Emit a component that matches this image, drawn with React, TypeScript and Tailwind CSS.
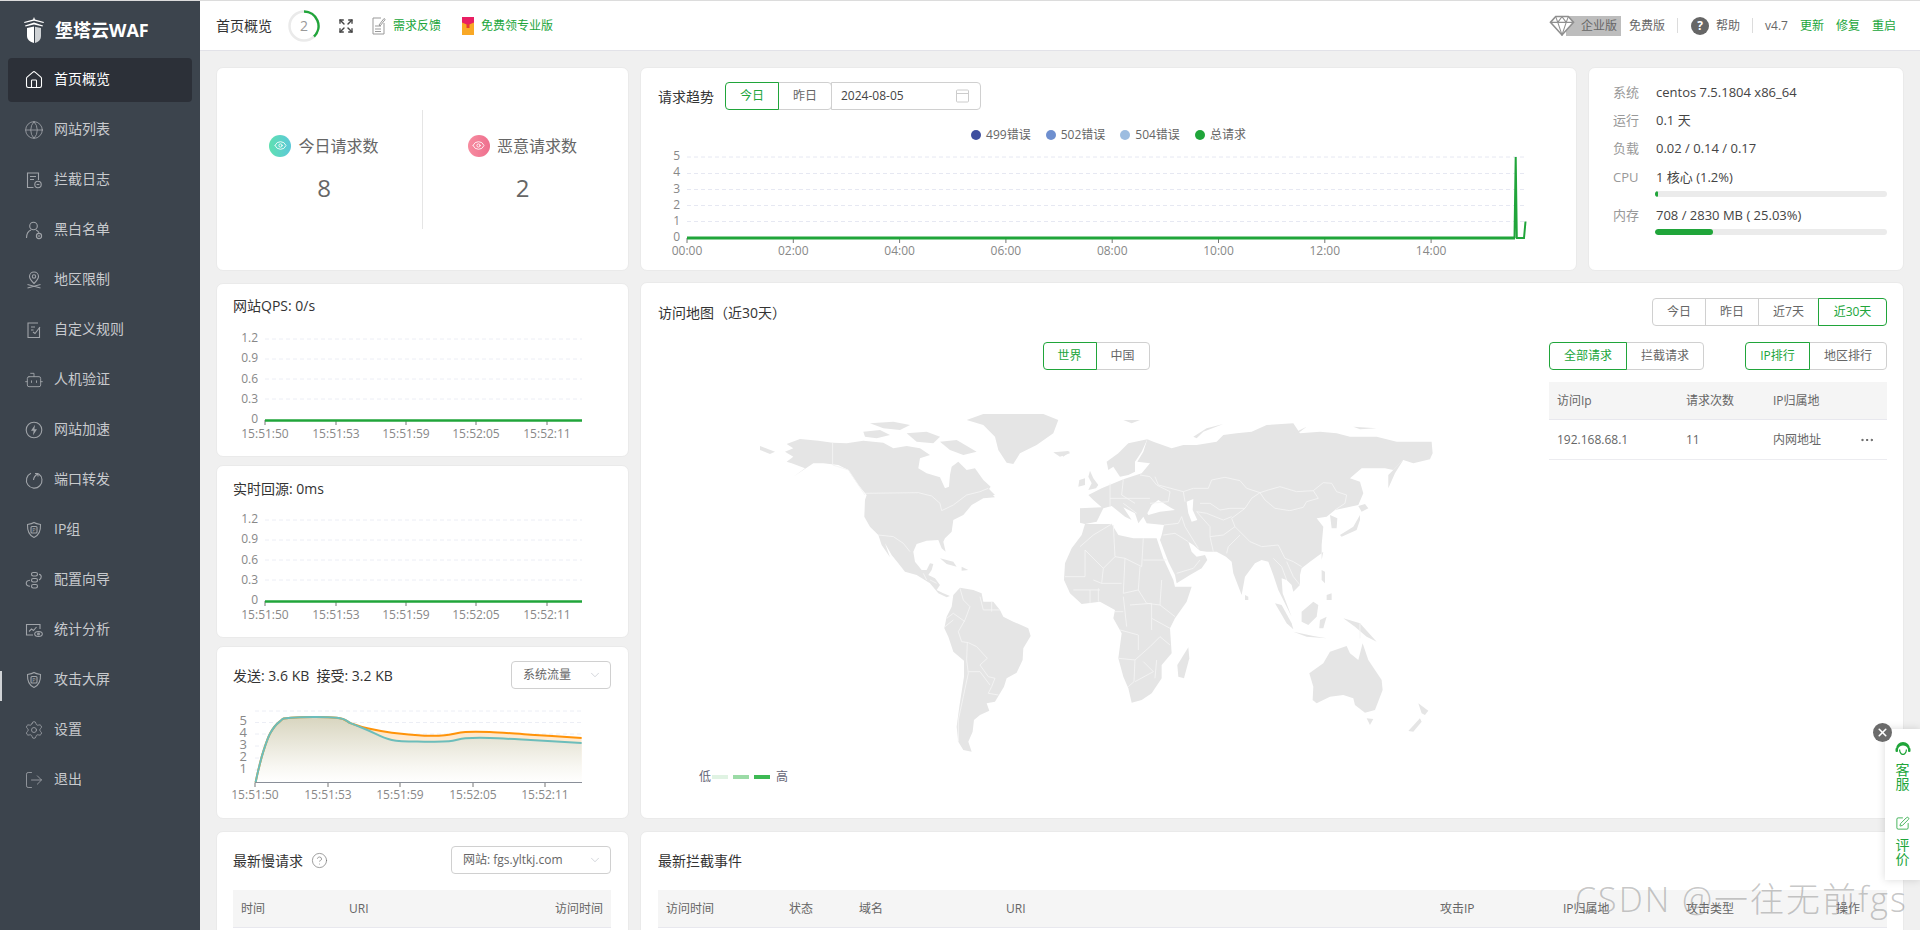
import React from "react";
import { House, Globe, Bot, Settings, LogOut, Expand, Eye, ChevronDown, Ellipsis, SquarePen, X, CircleHelp } from "lucide-react";

type P = number[][];
const smooth = (p: P) => {
  let d = `M${p[0][0]},${p[0][1]}`;
  for (let i = 0; i < p.length - 1; i++) {
    const a = p[i - 1] || p[i], b = p[i], c = p[i + 1], e = p[i + 2] || c;
    d += ` C${b[0] + (c[0] - a[0]) / 6},${b[1] + (c[1] - a[1]) / 6} ${c[0] - (e[0] - b[0]) / 6},${c[1] - (e[1] - b[1]) / 6} ${c[0]},${c[1]}`;
  }
  return d;
};
const T = (a: P): P => a.map(([x, y]) => [x / 2.45, 620 + y / 3]);
const rise: P = [[626, 488], [634, 445], [645, 395], [662, 340], [685, 305], [712, 293], [825, 293], [860, 310]];
const orange = T([...rise, [900, 325], [960, 338], [1040, 347], [1090, 346], [1140, 336], [1200, 336], [1300, 344], [1425, 354]]);
const teal = T([...rise, [900, 330], [960, 360], [1040, 365], [1100, 364], [1140, 355], [1200, 354], [1300, 360], [1425, 369]]);
const BASE = 782.5;
const area = (p: P) => `${smooth(p)} L${p[p.length - 1][0]},${BASE} L${p[0][0]},${BASE} Z`;

const LAND_AM = [
  "110,72 150,57 205,62 248,68 290,70 340,62 400,68 430,85 470,78 510,85 540,105 510,115 505,145 530,160 570,172 585,205 597,200 600,165 605,140 625,125 650,150 675,145 700,180 722,200 715,210 735,232 700,235 665,255 640,285 610,300 605,335 585,355 580,365 587,395 575,385 565,360 530,362 500,372 490,395 495,425 515,450 530,450 540,430 550,432 545,450 535,465 555,475 570,495 560,510 580,520 600,528 590,532 565,520 540,490 500,465 465,455 445,430 425,405 405,370 420,412 395,375 385,345 360,320 343,290 345,240 350,225 325,195 295,150 265,135 220,130 190,130 160,150 130,170 165,145 125,130 110,125 130,110 105,95 130,85",
  "340,35 390,30 420,45 380,55 345,50",
  "360,10 430,5 480,15 450,30 400,25",
  "470,40 530,35 570,50 550,70 500,65",
  "570,65 620,60 680,95 640,105 600,90",
  "700,-18 880,-18 925,0 910,40 860,75 810,100 790,132 770,128 745,90 735,50 700,15 650,0",
  "910,97 955,93 960,100 930,110",
  "30,78 75,95 60,102 30,90",
  "715,205 735,225 712,225",
  "570,415 610,425 620,440 590,432",
  "635,440 655,450 635,452",
  "630,503 670,510 695,520 700,545 730,545 750,570 760,590 790,605 835,625 842,648 820,685 818,720 800,758 770,775 762,800 735,845 710,850 718,872 690,885 672,900 668,935 655,965 665,995 640,990 625,965 620,920 628,860 642,770 642,722 610,695 595,650 583,625 590,590 605,560 610,525",
];
const BORDER_AM = "M345,220 L505,218 L545,228 L570,250 L575,272 L610,255 L650,225 L690,215 L715,205 M248,68 L248,135 L295,150 L325,195 L345,225 M385,345 L430,350 L460,370 L480,395 M520,460 L530,480 M540,480 L560,490 M630,505 L640,540 L660,560 L645,600 L625,635 L635,665 L655,668 L680,680 L712,715 L690,735 L715,770 L735,775 L725,800 L715,820 M652,668 L650,720 L655,760 L640,830 L625,900 L625,965 M590,595 L610,580 L645,605 M585,620 L610,600 M690,530 L700,570 L750,570 M725,545 L725,575 M655,755 L690,755 L720,795 M715,820 L745,825";
const LAND_EA = [
  "280,65 335,85 370,75 410,75 470,65 490,45 530,40 575,35 620,15 700,10 720,40 780,35 830,40 870,50 950,50 1010,65 1115,65 1118,100 1110,118 1060,130 1030,120 1000,150 975,145 905,145 870,175 900,185 910,220 895,255 850,265 825,270 800,290 770,295 790,320 785,375 785,400 750,425 725,445 720,465 720,495 700,515 695,495 680,480 665,475 668,520 695,590 680,560 655,510 640,465 625,425 605,420 585,430 555,470 545,525 520,460 515,425 498,410 470,395 440,395 420,392 400,375 385,365 395,395 410,410 435,405 442,420 425,445 390,465 350,490 345,465 325,425 300,360 305,345 312,315 260,310 250,290 235,310 225,280 190,262 215,300 195,290 155,258 130,265 110,305 75,312 60,308 60,265 125,262 100,240 85,225 125,205 190,178 245,160 270,130 232,125 250,95 262,58",
  "140,125 175,100 205,70 262,58 245,95 225,125 225,155 205,165 180,170 160,140 145,150",
  "90,152 100,175 115,195 108,205 85,210 95,190 85,170",
  "58,180 75,175 75,195 55,200",
  "0,97 30,95 10,110",
  "400,50 440,25 490,12 430,35 410,55",
  "190,0 240,0 215,10",
  "880,20 950,25 900,28",
  "700,40 740,20 720,35",
  "985,205 985,165 1030,120 1005,160",
  "840,345 880,320 900,285 900,300 890,330 845,350",
  "895,258 915,252 925,265 905,275",
  "810,285 832,295 830,325 815,325",
  "785,400 790,395 785,420",
  "555,525 565,530 565,540 555,540",
  "785,450 795,455 795,490 785,480",
  "800,525 815,520 815,540 800,540",
  "645,550 665,555 695,610 700,628 680,610",
  "700,635 760,648 800,655 740,650",
  "725,575 760,545 775,555 770,590 745,615 725,605",
  "780,600 800,590 790,625 778,625",
  "850,595 900,610 950,665 920,650 885,620",
  "748,760 790,730 810,695 860,678 870,700 895,720 908,670 925,720 965,780 968,810 945,870 915,878 885,855 880,835 850,825 810,830 770,850 758,840 760,800",
  "920,895 940,897 930,915",
  "1075,850 1105,872 1095,885 1085,880",
  "1045,933 1080,895 1085,905 1060,935",
  "385,682 388,715 372,775 355,770 352,735",
  "75,312 155,312 175,345 220,355 290,355 310,415 340,480 345,500 395,500 380,545 345,595 330,625 335,700 305,735 305,775 275,820 245,840 215,848 205,805 190,770 175,715 185,640 160,595 165,570 120,545 65,552 30,520 12,480 15,430 35,385 65,345",
];
const SEAS_EA = [
  "262,280 275,255 295,240 330,262 345,270 300,275 265,285",
  "380,245 400,237 398,270 412,300 395,305 385,280",
];
const BORDER_EA = "M370,215 L400,205 L445,205 L455,180 L495,172 L540,182 L560,205 L600,218 L625,210 L660,200 L710,215 L760,212 L790,188 L815,190 L830,215 L860,225 L855,250 L825,270 M600,218 L615,240 L645,265 L690,272 L730,262 L740,245 L775,235 L760,212 M370,215 L375,245 M420,250 L450,250 L480,270 L510,265 L555,265 L575,235 L600,218 M555,265 L515,295 L525,320 L550,345 L570,365 L605,380 L655,375 L675,415 L700,425 L725,440 M365,290 L375,320 L415,385 M410,275 L450,320 L450,350 L460,395 M450,350 L490,345 L525,320 M500,400 L505,380 L540,345 M410,275 L440,280 L490,300 L515,290 M312,315 L355,310 L365,290 M310,345 L345,340 L385,365 M350,460 L400,445 L420,420 M150,190 L150,260 M190,178 L185,225 L225,250 M240,165 L270,170 L290,195 L330,215 L325,245 L270,250 M150,235 L270,235 M190,250 L230,280 M285,170 L295,195 L370,215 M640,415 L665,440 L680,480 M680,425 L700,470 L720,495 M60,380 L100,345 L155,312 M160,315 L165,410 L130,445 L75,390 L75,470 L15,470 M165,410 L195,415 L245,440 L250,355 M250,420 L320,420 M195,415 L190,520 M130,445 L125,490 M240,440 L235,510 L260,550 L300,555 M190,520 L235,510 M305,480 L300,555 L345,590 M190,530 L200,620 M165,575 L190,575 M210,555 L275,550 L275,630 M180,630 L235,645 L235,690 M330,625 L275,595 M175,715 L225,720 L270,680 L300,650 L330,675 M225,720 L222,785 L205,800 M225,785 L280,755 L250,725 M290,720 L285,775 M100,480 L125,490 L185,490 M40,510 L120,510 M90,510 L90,550 M115,505 L115,545 M900,610 L900,655";

const WorldMap = () => (
  <svg viewBox="740 410 720 350" className="block w-[720px] h-[350px] ml-[82px] mt-[40px]">
    <g transform="translate(750 420) scale(0.3333)" fill="#e5e5e5">
      {LAND_AM.map((p, i) => <polygon key={i} points={p} />)}
      <path d={BORDER_AM} fill="none" stroke="#f5f5f5" strokeWidth="2.6" />
    </g>
    <g transform="translate(1060 420) scale(0.3333)" fill="#e5e5e5">
      {LAND_EA.map((p, i) => <polygon key={i} points={p} />)}
      {SEAS_EA.map((p, i) => <polygon key={i} points={p} fill="#fff" />)}
      <path d={BORDER_EA} fill="none" stroke="#f5f5f5" strokeWidth="2.6" />
    </g>
  </svg>
);

const ic = { width: 20, height: 20, viewBox: "0 0 20 20", fill: "none", stroke: "currentColor", strokeWidth: 1.1 };
const ShieldP = () => (
  <svg {...ic}>
    <path d="M3.5 4.5 C7 4 9 3.2 10 2.5 C11 3.2 13 4 16.5 4.5 C16.8 11 14.5 15.5 10 17.5 C5.5 15.5 3.2 11 3.5 4.5Z" />
    <rect x="7" y="6.5" width="6" height="6.5" rx="1" />
    <text x="10" y="11.8" fontSize="5.5" textAnchor="middle" fill="currentColor" stroke="none">P</text>
  </svg>
);
const DocIcon = () => (
  <svg {...ic}><path d="M14.5 10V3H3.5v14.5h6" /><path d="M6 6.5h6M6 9.5h4" /><circle cx="14" cy="14.5" r="3.2" /><path d="M12.6 14.5h2.8" /></svg>
);
const UserIcon = () => (
  <svg {...ic}><circle cx="9.5" cy="6" r="3.8" /><path d="M2.5 18c0-4 2-7 4.5-8M12 10c1.3.6 2.3 1.5 3 2.8" /><circle cx="15" cy="16" r="2.6" /><path d="M13.8 16h2.4" /></svg>
);
const PinIcon = () => (
  <svg {...ic}><path d="M10 13.5C7 10.5 5.5 8.5 5.5 6.500a4.500 4.500 0 0 1 9 0c0 2-1.500 4-4.500 7Z" /><circle cx="10" cy="6.500" r="1.700" /><path d="M3.500 14.500l13 3.500M16.500 14.500l-13 3.500" /></svg>
);
const RuleIcon = () => (
  <svg {...ic}><path d="M15.500 7.500V17.500H4V3h10" /><path d="M7 7h4M7 10h2.500" /><path d="M9 12l2 1.500 5-6.500" /></svg>
);
const BoltIcon = () => (
  <svg {...ic}><circle cx="10" cy="10" r="7.800" /><path d="M11 4.800 7 10.800h2.600L9 15.200l4-6h-2.600Z" fill="currentColor" stroke="none" /></svg>
);
const PortIcon = () => (
  <svg {...ic}><path d="M7 3.200A7.800 7.800 0 1 0 14.500 3.800" /><path d="M9.500 10c.2-2.500 1.500-4.500 4-6M11 3.500h3v3" /></svg>
);
const FlowIcon = () => (
  <svg {...ic}><rect x="7.500" y="2.500" width="6" height="3.500" rx="1.700" /><rect x="7.500" y="8.500" width="6" height="3.500" rx="1.700" /><rect x="7.500" y="14.500" width="6" height="3.500" rx="1.700" /><path d="M15 4.200c3 .5 3 4.500 0 5.800M6 10.200c-5 .5-5 5.500 0 6" /></svg>
);
const StatIcon = () => (
  <svg {...ic}><path d="M9 15H2.500V4.500h13.500V9" /><path d="M5 11.500l2.500-2.500 2 1.500 3-3.500" /><ellipse cx="14.500" cy="14" rx="3.800" ry="2.500" /><circle cx="14.500" cy="14" r=".9" /></svg>
);

const MENU: [string, React.ReactNode][] = [
  ["首页概览", <House size={20} strokeWidth={1.3} />],
  ["网站列表", <Globe size={20} strokeWidth={1} />],
  ["拦截日志", <DocIcon />],
  ["黑白名单", <UserIcon />],
  ["地区限制", <PinIcon />],
  ["自定义规则", <RuleIcon />],
  ["人机验证", <Bot size={20} strokeWidth={1.1} />],
  ["网站加速", <BoltIcon />],
  ["端口转发", <PortIcon />],
  ["IP组", <ShieldP />],
  ["配置向导", <FlowIcon />],
  ["统计分析", <StatIcon />],
  ["攻击大屏", <ShieldP />],
  ["设置", <Settings size={20} strokeWidth={1} />],
  ["退出", <LogOut size={20} strokeWidth={1} />],
];

const Sidebar = () => (
  <aside className="relative w-[200px] shrink-0 bg-[#3c444d] h-full">
    <div className="h-[57px] flex items-center pl-[23px]">
      <svg width="22" height="26" viewBox="0 0 22 26" fill="#fff">
        <path d="M11 0 L12 2.5 L21 5 L20.500 6 L11 3.800 L1.500 6 L1 5 L10 2.500Z" />
        <path d="M11 5.500 L20 8.500 L19.500 9.500 L11 7.500 L2.500 9.500 L2 8.500Z" />
        <path d="M4 11 L11 9.500 L11 26 C7 25 4 22.500 4 19Z" />
        <path d="M18 11 L12 9.800 L12 26 C15.500 25 18 22.500 18 19Z" fill="#cfd2d5" />
      </svg>
      <span className="ml-[10px] text-[18px] font-bold text-white leading-none">堡塔云WAF</span>
    </div>
    <nav className="px-[8px] flex flex-col gap-[6px]">
      {MENU.map(([label, icon], i) => (
        <div key={label} className={i === 0 ? "h-[44px] rounded-[4px] bg-[#2c3038] flex items-center pl-[16px] text-white" : "h-[44px] flex items-center pl-[16px] text-[#c8cacd]"}>
          <span className={i === 0 ? "w-[20px] flex justify-center text-white" : "w-[20px] flex justify-center text-[#a0a4a9]"}>{icon}</span>
          <span className="ml-[10px] text-[14px] leading-[18px] pb-[2px]">{label}</span>
        </div>
      ))}
    </nav>
    <div className="absolute left-0 top-[670px] w-[2px] h-[30px] bg-[#d0d3d6]" />
  </aside>
);

const Divider = () => <span className="w-px h-[15px] bg-[#dcdcdc]" />;

const Header = () => (
  <header className="h-[50px] shrink-0 bg-white border-b border-[#e2e2e8] flex items-center pl-[16px] pr-[24px] text-[12px]">
    <span className="text-[14px] text-[#333]">首页概览</span>
    <span className="relative ml-[16px] w-[32px] h-[32px] flex items-center justify-center text-[#999] text-[14px]">
      <svg width="32" height="32" viewBox="0 0 32 32" className="absolute inset-0">
        <circle cx="16" cy="16" r="14.5" fill="none" stroke="#eaeaea" strokeWidth="2.5" />
        <path d="M16 1.5A14.5 14.5 0 0 1 26 26.5" fill="none" stroke="#20a53a" strokeWidth="2.5" />
      </svg>
      2
    </span>
    <Expand size={16} strokeWidth={2} className="ml-[18px] text-[#444]" />
    <svg width="14" height="18" viewBox="0 0 14 18" fill="none" stroke="#999" strokeWidth="1" className="ml-[18px]">
      <path d="M9 1H1v16h11V6" /><path d="M3 9h6M3 12h6M3 14.5h6" /><path d="M7 8l5-6.500 1.200 1L8 9Z" />
    </svg>
    <span className="ml-[7px] text-[#20a53a]">需求反馈</span>
    <svg width="12" height="18" viewBox="0 0 12 18" className="ml-[21px]">
      <rect width="12" height="18" fill="#f9a825" />
      <path d="M0 0h12v5.500L6 8 0 5.500Z" fill="#e91e63" />
      <rect x="4.500" y="7" width="3" height="4" fill="#e53935" />
    </svg>
    <span className="ml-[7px] text-[#20a53a]">免费领专业版</span>
    <div className="ml-auto flex items-center">
      <div className="flex items-center">
        <svg width="26" height="21" viewBox="0 0 24 20" fill="none" stroke="#8f8f8f" strokeWidth="1.5" className="relative z-10">
          <path d="M6 1.500h12l5 5.500L12 19 1 7Z" fill="#fff" /><path d="M1 7h22M8 7l4 12 4-12M6 1.500 8 7l4-5.500L16 7l2-5.500" strokeWidth="1" />
        </svg>
        <span className="-ml-[9px] w-[55px] h-[20px] bg-[#bdbdbd] text-[#666] flex items-center justify-end pr-[4px]">企业版</span>
      </div>
      <span className="ml-[8px] text-[#666]">免费版</span>
      <span className="ml-[12px] flex"><Divider /></span>
      <span className="ml-[13px] w-[18px] h-[18px] rounded-full bg-[#666] text-white font-bold flex items-center justify-center">?</span>
      <span className="ml-[7px] text-[#666]">帮助</span>
      <span className="ml-[12px] flex"><Divider /></span>
      <span className="ml-[12px] text-[#666]">v4.7</span>
      <span className="ml-[12px] text-[#20a53a]">更新</span>
      <span className="ml-[12px] text-[#20a53a]">修复</span>
      <span className="ml-[12px] text-[#20a53a]">重启</span>
    </div>
  </header>
);

const Card = ({ className = "", children }: { className?: string; children?: React.ReactNode }) => (
  <div className={`bg-white rounded-[7px] border border-[#eaeaea] shrink-0 ${className}`}>{children}</div>
);

const Seg = ({ items, widths, active }: { items: string[]; widths: string[]; active: number }) => (
  <div className="flex h-[28px] text-[12px]">
    {items.map((t, i) => {
      const first = i === 0, last = i === items.length - 1;
      const on = i === active;
      return (
        <span key={t} className={`${widths[i]} flex items-center justify-center border ${on ? "relative z-10 border-[#20a53a] text-[#20a53a]" : "border-[#d0d0d0] text-[#666]"} ${first ? "rounded-l-[4px]" : "-ml-px"} ${last ? "rounded-r-[4px]" : ""}`}>{t}</span>
      );
    })}
  </div>
);

const Stat = ({ label, value, from, to, className }: { label: string; value: string; from: string; to: string; className: string }) => (
  <div className={`w-[205px] flex flex-col items-center ${className}`}>
    <div className="flex items-center h-[22px]">
      <span className={`w-[22px] h-[22px] rounded-full bg-gradient-to-r ${from} ${to} flex items-center justify-center text-white`}>
        <Eye size={13} strokeWidth={1.6} />
      </span>
      <span className="ml-[7px] text-[16px] text-[#666]">{label}</span>
    </div>
    <span className="mt-[15px] text-[24px] leading-[32px] text-[#666]">{value}</span>
  </div>
);

const X_LABELS = ["15:51:50", "15:51:53", "15:51:59", "15:52:05", "15:52:11"];
const axisText = { fill: "#888", fontSize: 12 };

const QpsChart = ({ className = "" }: { className?: string }) => {
  const xs = [48, 119, 189, 259, 330];
  return (
    <svg viewBox="0 0 411 130" className={`block w-[411px] h-[130px] ${className}`}>
      {[19, 39, 59, 79].map((y) => <line key={y} x1="48" x2="365" y1={y} y2={y} stroke="#eceef5" strokeDasharray="4 3" />)}
      {["1.2", "0.9", "0.6", "0.3", "0"].map((t, i) => (
        <text key={t} x="41" y={19 + i * 20.2} textAnchor="end" dominantBaseline="middle" {...axisText}>{t}</text>
      ))}
      {xs.map((x, i) => (
        <g key={x}>
          <line x1={x} x2={x} y1="100" y2="105" stroke="#777" />
          <text x={x} y="115" textAnchor="middle" dominantBaseline="middle" {...axisText}>{X_LABELS[i]}</text>
        </g>
      ))}
      <line x1="48" x2="365" y1="100.5" y2="100.5" stroke="#20a53a" strokeWidth="2.5" />
    </svg>
  );
};

const TrafficChart = () => (
  <svg viewBox="217 700 411 110" className="block w-[411px] h-[110px] mt-[11px]">
    <defs>
      <linearGradient id="ga" x1="0" y1="0" x2="0" y2="1"><stop offset="0" stopColor="#ffdfb8" /><stop offset="1" stopColor="#fff" /></linearGradient>
      <linearGradient id="gb" x1="0" y1="0" x2="0" y2="1"><stop offset="0" stopColor="#d8d5bf" /><stop offset=".75" stopColor="#f8f7f2" /><stop offset="1" stopColor="#fff" /></linearGradient>
    </defs>
    {[711, 722.5, 734, 746, 758, 770].map((y) => <line key={y} x1="255" x2="582" y1={y} y2={y} stroke="#eceef5" strokeDasharray="4 3" />)}
    {["5", "4", "3", "2", "1"].map((t, i) => (
      <text key={t} x="247" y={722 + i * 12} textAnchor="end" dominantBaseline="middle" fill="#888" fontSize="13">{t}</text>
    ))}
    <path d={area(orange)} fill="url(#ga)" />
    <path d={area(teal)} fill="url(#gb)" />
    <path d={smooth(orange)} fill="none" stroke="#ff9309" strokeWidth="2" />
    <path d={smooth(teal)} fill="none" stroke="#6cbdbb" strokeWidth="2" />
    <line x1="255" x2="582" y1="782.5" y2="782.5" stroke="#8a8f99" />
    {[255, 328, 400, 473, 545].map((x, i) => (
      <g key={x}>
        <line x1={x} x2={x} y1="783" y2="787" stroke="#777" />
        <text x={x} y="796" textAnchor="middle" dominantBaseline="middle" {...axisText}>{X_LABELS[i]}</text>
      </g>
    ))}
  </svg>
);

const TrendChart = () => (
  <svg viewBox="641 145 935 120" className="block w-[935px] h-[120px]">
    {[157, 173.5, 189.5, 205.5, 221.5].map((y) => <line key={y} x1="687" x2="1525" y1={y} y2={y} stroke="#e6e8f2" strokeDasharray="4 3" />)}
    {["5", "4", "3", "2", "1", "0"].map((t, i) => (
      <text key={t} x="680" y={157 + i * 16.2} textAnchor="end" dominantBaseline="middle" {...axisText}>{t}</text>
    ))}
    {["00:00", "02:00", "04:00", "06:00", "08:00", "10:00", "12:00", "14:00"].map((t, i) => {
      const x = 687 + i * 106.3;
      return (
        <g key={t}>
          <line x1={x} x2={x} y1="238" y2="243" stroke="#777" />
          <text x={x} y="252" textAnchor="middle" dominantBaseline="middle" {...axisText}>{t}</text>
        </g>
      );
    })}
    <line x1="687" x2="1515" y1="238" y2="238" stroke="#20a53a" strokeWidth="3" />
    <path d="M1514.5 238 L1515.7 157 L1516.8 238 H1524 L1525.5 221.5" fill="none" stroke="#20a53a" strokeWidth="2" />
  </svg>
);

const LEGEND: [string, string][] = [["499错误", "bg-[#3f4f9f]"], ["502错误", "bg-[#6e8fcf]"], ["504错误", "bg-[#9dbde0]"], ["总请求", "bg-[#20a53a]"]];

const SelectBox = ({ label, className }: { label: string; className: string }) => (
  <div className={`h-[28px] rounded-[4px] border border-[#d0d0d0] flex items-center pl-[11px] pr-[8px] text-[12px] text-[#666] justify-between ${className}`}>
    <span>{label}</span>
    <ChevronDown size={14} strokeWidth={1.2} className="text-[#c0c4cc]" />
  </div>
);

const SysRow = ({ k, v, className = "" }: { k: string; v: string; className?: string }) => (
  <div className={`flex items-center text-[13px] ${className}`}>
    <span className="w-[43px] text-[#999]">{k}</span>
    <span className="text-[#444]">{v}</span>
  </div>
);

const Bar = ({ w }: { w: string }) => (
  <div className="ml-[42px] mt-[3px] h-[6px] rounded-full bg-[#ebebeb] w-[232px] overflow-hidden">
    <div className={`h-full rounded-full bg-[#20a53a] ${w}`} />
  </div>
);

const Row1 = () => (
  <div className="flex gap-[11px]">
    <Card className="w-[413px] h-[204px] flex items-center">
      <Stat label="今日请求数" value="8" from="from-[#5fe0b0]" to="to-[#5cc8d8]" className="pl-[9px]" />
      <div className="w-px h-[119px] bg-[#e5e5e5]" />
      <Stat label="恶意请求数" value="2" from="from-[#f78ca0]" to="to-[#ee6f8e]" className="pr-[6px]" />
    </Card>
    <Card className="w-[937px] h-[204px]">
      <div className="flex items-center pl-[17px] pt-[14px]">
        <span className="text-[14px] text-[#333] w-[67px]">请求趋势</span>
        <Seg items={["今日", "昨日"]} widths={["w-[54px]", "w-[54px]"]} active={0} />
        <div className="-ml-px w-[150px] h-[28px] border border-[#d0d0d0] rounded-r-[4px] flex items-center justify-between pl-[9px] pr-[11px] text-[12px] text-[#444]">
          2024-08-05
          <svg width="13" height="14" viewBox="0 0 13 14" fill="none" stroke="#ccc"><rect x=".5" y="1" width="12" height="12" rx="1" /><path d="M.5 4.5h12" /></svg>
        </div>
      </div>
      <div className="mt-[15px] h-[20px] flex items-center justify-center gap-[15px] text-[12px] text-[#666]">
        {LEGEND.map(([t, c]) => (
          <span key={t} className="flex items-center gap-[5px]"><i className={`w-[10px] h-[10px] rounded-full ${c}`} />{t}</span>
        ))}
      </div>
      <TrendChart />
    </Card>
    <Card className="w-[316px] h-[204px] pl-[24px] pt-[11px]">
      <SysRow k="系统" v="centos 7.5.1804 x86_64" className="h-[28px]" />
      <SysRow k="运行" v="0.1 天" className="h-[28px]" />
      <SysRow k="负载" v="0.02 / 0.14 / 0.17" className="h-[28px]" />
      <SysRow k="CPU" v="1 核心 (1.2%)" className="h-[20px] mt-[5px]" />
      <Bar w="w-[3px]" />
      <SysRow k="内存" v="708 / 2830 MB ( 25.03%)" className="h-[20px] mt-[9px]" />
      <Bar w="w-[58px]" />
    </Card>
  </div>
);

const LeftStack = () => (
  <div className="w-[413px] flex flex-col gap-[8px] mt-px">
    <Card className="h-[174px]">
      <div className="pl-[16px] pt-[12px] text-[14px] h-[32px] flex items-end text-[#333]">网站QPS: 0/s</div>
      <QpsChart className="mt-[4px]" />
    </Card>
    <Card className="h-[173px]">
      <div className="pl-[16px] pt-[13px] text-[14px] h-[33px] flex items-end text-[#333]">实时回源: 0ms</div>
      <QpsChart className="mt-[2px]" />
    </Card>
    <Card className="h-[173px]">
      <div className="flex items-center justify-between pl-[16px] pr-[17px] pt-[14px]">
        <span className="text-[14px] text-[#333]">发送: 3.6 KB&nbsp;&nbsp;接受: 3.2 KB</span>
        <SelectBox label="系统流量" className="w-[100px]" />
      </div>
      <TrafficChart />
    </Card>
  </div>
);

const MapCard = () => (
  <Card className="w-[1264px] h-[537px] flex flex-col">
    <div className="flex items-center justify-between pl-[17px] pr-[16px] pt-[15px]">
      <span className="text-[14px] text-[#333]">访问地图（近30天）</span>
      <Seg items={["今日", "昨日", "近7天", "近30天"]} widths={["w-[54px]", "w-[54px]", "w-[61px]", "w-[69px]"]} active={3} />
    </div>
    <div className="flex pl-[17px] pr-[16px] mt-[16px]">
      <div className="w-[891px]">
        <div className="flex justify-center pr-[15px]">
          <Seg items={["世界", "中国"]} widths={["w-[54px]", "w-[54px]"]} active={0} />
        </div>
        <WorldMap />
        <div className="ml-[41px] mt-[8px] flex items-center text-[12px] text-[#667]">
          <span>低</span>
          <i className="ml-[1px] w-[16px] h-[4px] bg-[#e0f3e3]" />
          <i className="ml-[5px] w-[16px] h-[4px] bg-[#9bdba6]" />
          <i className="ml-[5px] w-[16px] h-[4px] bg-[#3db954]" />
          <span className="ml-[6px]">高</span>
        </div>
      </div>
      <div className="w-[338px]">
        <div className="flex justify-between">
          <Seg items={["全部请求", "拦截请求"]} widths={["w-[78px]", "w-[78px]"]} active={0} />
          <Seg items={["IP排行", "地区排行"]} widths={["w-[65px]", "w-[78px]"]} active={0} />
        </div>
        <div className="mt-[12px] h-[38px] bg-[#f5f5f5] border-b border-[#e8e8ee] flex items-center pl-[8px] text-[12px] text-[#666]">
          <span className="w-[129px]">访问Ip</span><span className="w-[87px]">请求次数</span><span>IP归属地</span>
        </div>
        <div className="h-[40px] border-b border-[#ececf0] flex items-center pl-[8px] text-[12px] text-[#666]">
          <span className="w-[129px]">192.168.68.1</span><span className="w-[87px]">11</span><span className="w-[86px]">内网地址</span>
          <Ellipsis size={16} strokeWidth={1.5} className="text-[#555]" />
        </div>
      </div>
    </div>
  </Card>
);

const BLOCK_COLS: [string, string][] = [["访问时间", "w-[123px]"], ["状态", "w-[70px]"], ["域名", "w-[147px]"], ["URI", "w-[434px]"], ["攻击IP", "w-[123px]"], ["IP归属地", "w-[123px]"], ["攻击类型", "w-[150px]"], ["操作", ""]];

const Row3 = () => (
  <div className="flex gap-[11px] mt-[12px]">
    <Card className="w-[413px] h-[300px] pl-[16px] pr-[17px] pt-[14px]">
      <div className="flex items-center justify-between">
        <span className="flex items-center text-[14px] text-[#333]">最新慢请求<CircleHelp size={17} strokeWidth={1} className="ml-[8px] text-[#777]" /></span>
        <SelectBox label="网站: fgs.yltkj.com" className="w-[160px]" />
      </div>
      <div className="mt-[16px] h-[38px] bg-[#f5f5f5] border-b border-[#e8e8ee] flex items-center justify-between px-[8px] text-[12px] text-[#666]">
        <span className="w-[108px]">时间</span><span className="flex-1">URI</span><span>访问时间</span>
      </div>
    </Card>
    <Card className="w-[1264px] h-[300px] pl-[17px] pr-[16px] pt-[14px]">
      <div className="h-[28px] flex items-center text-[14px] text-[#333]">最新拦截事件</div>
      <div className="mt-[16px] h-[38px] bg-[#f5f5f5] border-b border-[#e8e8ee] flex items-center pl-[8px] text-[12px] text-[#666]">
        {BLOCK_COLS.map(([t, w]) => <span key={t} className={w}>{t}</span>)}
      </div>
    </Card>
  </div>
);

const Floating = () => (
  <>
    <div className="absolute right-0 top-[728px] w-[35px] h-[151px] bg-white shadow-[0_0_8px_rgba(0,0,0,0.15)] flex flex-col items-center text-[#20a53a] text-[14px] leading-[13px]">
      <svg width="16" height="16" viewBox="0 0 16 16" className="mt-[11px]" fill="#20a53a">
        <path d="M1 9 A7 7 0 0 1 15 9 L13 9 C12 6 10 5.500 8 5.500 C6 5.500 4 6 3 9Z" />
        <rect x="0.500" y="8" width="2.500" height="4" rx="1" />
        <rect x="13" y="8" width="2.500" height="4" rx="1" />
        <path d="M4 9.500 C4 13 6 15 8 15 C10 15 12 13 12 9.500 L10.800 9.500 C10.800 12 9.500 13.700 8 13.700 C6.500 13.700 5.200 12 5.200 9.500Z" />
      </svg>
      <span className="mt-[7px]">客</span>
      <span className="mt-[1px]">服</span>
      <SquarePen size={15} strokeWidth={1.3} className="mt-[26px]" />
      <span className="mt-[7px]">评</span>
      <span className="mt-[1px]">价</span>
    </div>
    <div className="absolute left-[1873px] top-[722px] w-[19px] h-[19px] rounded-full bg-[#6b6b6b] flex items-center justify-center text-white">
      <X size={13} strokeWidth={3} />
    </div>
    <div className="absolute left-[1575px] top-[878px] text-[34px] leading-[40px] tracking-[2px] whitespace-nowrap font-light text-[rgba(130,130,130,0.45)]">CSDN @一往无前fgs</div>
  </>
);

export default function App() {
  return (
    <div className="relative w-[1920px] h-[930px] overflow-hidden flex border-t border-[#dcdcdc] bg-[#f0f0f0] font-['Open_Sans','Noto_Sans_CJK_SC',sans-serif]">
      <Sidebar />
      <div className="flex-1 min-w-0 flex flex-col">
        <Header />
        <main className="flex-1 overflow-hidden pl-[16px] pt-[16px]">
          <Row1 />
          <div className="flex gap-[11px] mt-[11px]">
            <LeftStack />
            <MapCard />
          </div>
          <Row3 />
        </main>
      </div>
      <Floating />
    </div>
  );
}
